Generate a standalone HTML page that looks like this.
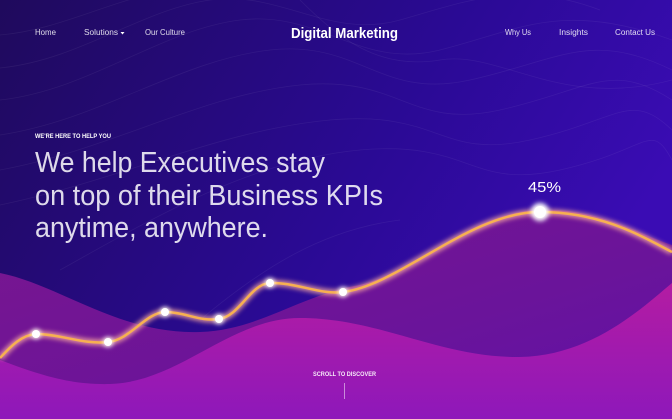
<!DOCTYPE html>
<html><head><meta charset="utf-8"><style>
html,body{margin:0;padding:0;width:672px;height:419px;overflow:hidden;background:#240a70}
svg{display:block}
text{font-family:"Liberation Sans",sans-serif;fill:#fff}
</style></head><body>
<svg width="672" height="419" viewBox="0 0 672 419" xmlns="http://www.w3.org/2000/svg">
<defs>
<linearGradient id="bg" x1="0" y1="0" x2="1" y2="0.4">
<stop offset="0" stop-color="#1f0a5c"/><stop offset="0.6" stop-color="#2a0a94"/><stop offset="1" stop-color="#3a0cb4"/>
</linearGradient>
<linearGradient id="back" x1="0" y1="0" x2="1" y2="1">
<stop offset="0" stop-color="#7a168e"/><stop offset="0.6" stop-color="#6a149a"/><stop offset="1" stop-color="#6010a8"/>
</linearGradient>
<linearGradient id="front" x1="0" y1="0" x2="0" y2="1">
<stop offset="0" stop-color="#b41ca2"/><stop offset="1" stop-color="#8e18ba"/>
</linearGradient>
<filter id="glow" x="-20%" y="-50%" width="140%" height="200%"><feGaussianBlur stdDeviation="2.5"/></filter>
</defs>
<rect width="672" height="419" fill="url(#bg)"/>
<g fill="none" stroke="#ffffff" stroke-opacity="0.06" stroke-width="0.8">
<path d="M0 35 C60 30 110 0 170 -10"/>
<path d="M0 68 C80 60 140 10 210 0 S330 40 400 20 S520 -20 600 10"/>
<path d="M0 100 C90 90 160 30 240 20 S360 70 440 50 S560 0 672 40"/>
<path d="M0 135 C100 120 180 60 270 50 S380 100 470 80 S590 30 672 70"/>
<path d="M0 170 C110 150 200 95 300 85 S410 130 500 110 S610 60 672 100"/>
<path d="M0 205 C120 180 220 130 330 120 S440 160 530 140 S630 90 672 130"/>
<path d="M60 270 C150 220 250 160 360 150 S470 190 560 170 S650 120 672 160"/>
<path d="M300 0 C340 40 380 70 440 60 S560 110 672 80"/>
<path d="M200 320 C260 270 320 230 400 220"/>
</g>
<path d="M0 273 C60 285 120 335 200 332 C260 330 300 295 360 285 C420 270 470 212 540 210 C600 208 640 235 672 245 L672 419 L0 419 Z" fill="url(#back)"/>
<path d="M0 360 C40 375 70 385 110 384 C180 382 230 318 300 318 C380 318 440 358 520 357 C590 356 640 310 672 283 L672 419 L0 419 Z" fill="url(#front)"/>
<path d="M0 358 C12 345 22 335 36 334 C60 334 85 345 108 342 C130 340 145 313 165 312 C185 312 200 322 219 319 C240 316 250 284 270 283 C295 282 320 295 343 292 C400 285 470 212 540 212 C600 212 640 235 672 252" fill="none" stroke="#ffb0a0" stroke-width="6" filter="url(#glow)" opacity="0.8"/>
<path d="M0 358 C12 345 22 335 36 334 C60 334 85 345 108 342 C130 340 145 313 165 312 C185 312 200 322 219 319 C240 316 250 284 270 283 C295 282 320 295 343 292 C400 285 470 212 540 212 C600 212 640 235 672 252" fill="none" stroke="#f7b050" stroke-width="2.5"/>
<g fill="#fff">
<circle cx="540" cy="212" r="9" filter="url(#glow)"/>
<g filter="url(#glow)"><circle cx="36" cy="334" r="5"/><circle cx="108" cy="342" r="5"/><circle cx="165" cy="312" r="5"/><circle cx="219" cy="319" r="5"/><circle cx="270" cy="283" r="5"/><circle cx="343" cy="292" r="5"/></g>
<circle cx="540" cy="212" r="6"/>
<circle cx="36" cy="334" r="4"/><circle cx="108" cy="342" r="4"/><circle cx="165" cy="312" r="4"/><circle cx="219" cy="319" r="4"/><circle cx="270" cy="283" r="4"/><circle cx="343" cy="292" r="4"/>
</g>
<g font-size="8" fill-opacity="0.85">
<text x="35" y="35" textLength="21" lengthAdjust="spacingAndGlyphs">Home</text>
<text x="84" y="35" textLength="34" lengthAdjust="spacingAndGlyphs">Solutions</text>
<text x="145" y="35" textLength="40" lengthAdjust="spacingAndGlyphs">Our Culture</text>
<text x="505" y="35" textLength="26" lengthAdjust="spacingAndGlyphs">Why Us</text>
<text x="559" y="35" textLength="29" lengthAdjust="spacingAndGlyphs">Insights</text>
<text x="615" y="35" textLength="40" lengthAdjust="spacingAndGlyphs">Contact Us</text>
</g>
<path d="M120.5 32 L124.5 32 L122.5 34.5 Z" fill="#fff"/>
<text x="291" y="38" font-size="15" font-weight="bold" textLength="107" lengthAdjust="spacingAndGlyphs">Digital Marketing</text>
<text x="35" y="138" font-size="6" font-weight="bold" textLength="76" lengthAdjust="spacingAndGlyphs">WE'RE HERE TO HELP YOU</text>
<g font-size="29" fill-opacity="0.85">
<text x="35" y="172" textLength="290" lengthAdjust="spacingAndGlyphs">We help Executives stay</text>
<text x="35" y="205" textLength="348" lengthAdjust="spacingAndGlyphs">on top of their Business KPIs</text>
<text x="35" y="237" textLength="233" lengthAdjust="spacingAndGlyphs">anytime, anywhere.</text>
</g>
<text x="528" y="192" font-size="15" textLength="33" lengthAdjust="spacingAndGlyphs">45%</text>
<text x="313" y="376" font-size="6" font-weight="bold" textLength="63" lengthAdjust="spacingAndGlyphs" fill-opacity="0.9">SCROLL TO DISCOVER</text>
<rect x="344" y="383" width="1" height="16" fill="#fff" fill-opacity="0.5"/>
</svg>
</body></html>
